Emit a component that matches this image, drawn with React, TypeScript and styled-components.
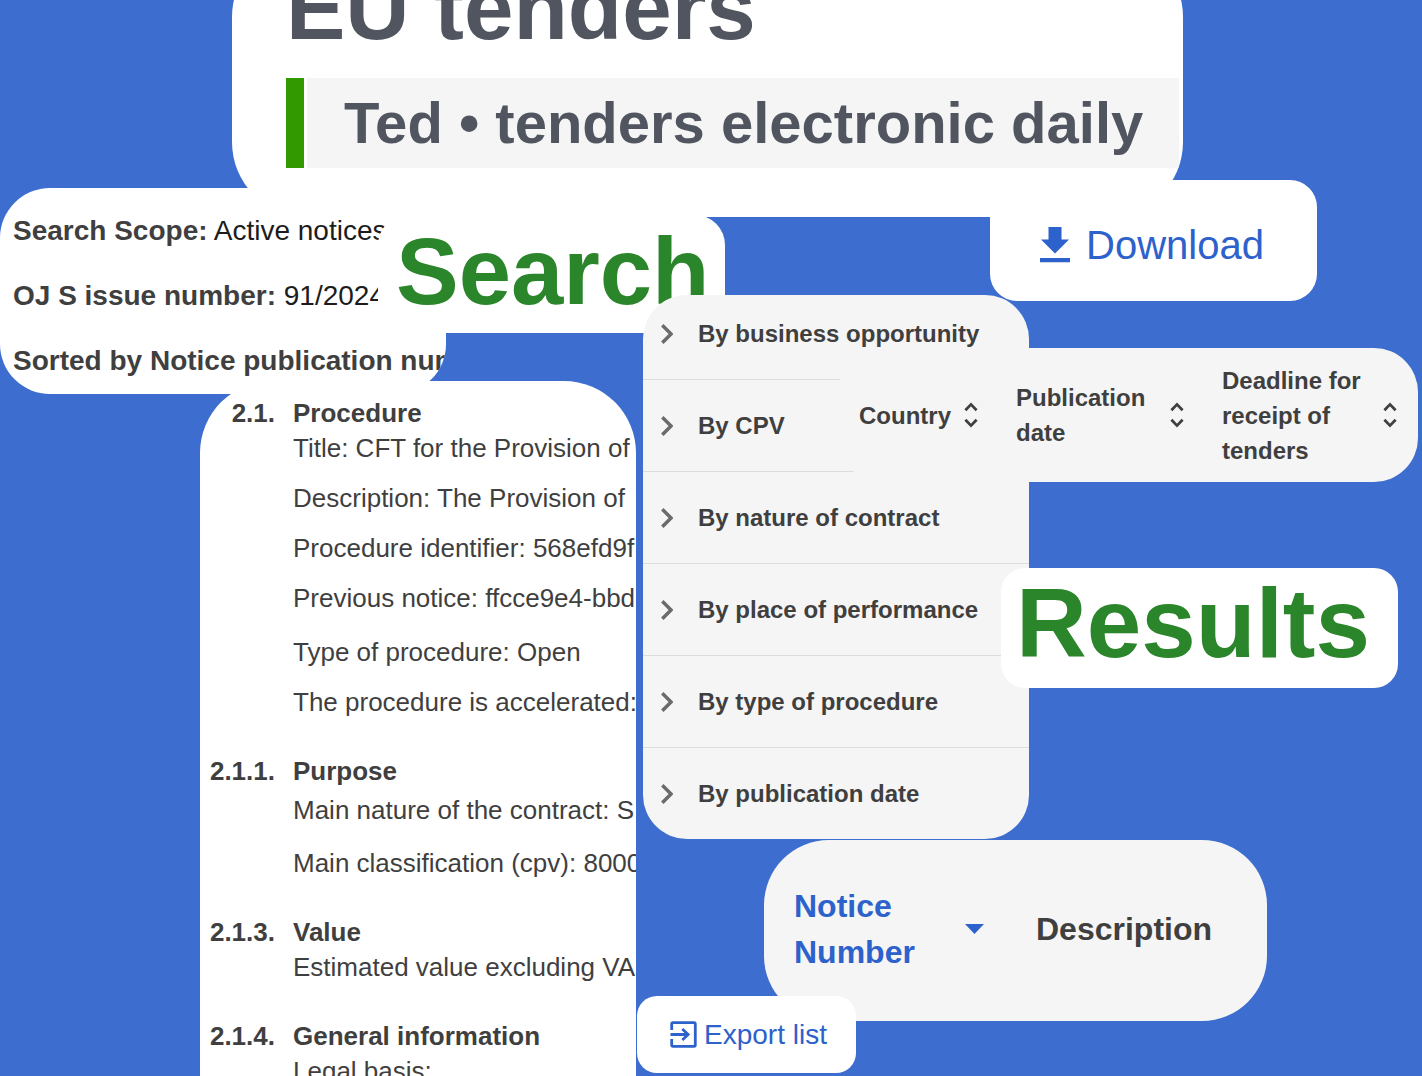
import React from "react";
import styled, { createGlobalStyle } from "styled-components";

const color = {
  backdrop: "#3d6dcf",
  paper: "#ffffff",
  panel: "#f5f5f5",
  ink: "#3f3f3f",
  heading: "#515560",
  link: "#2d61cb",
  green: "#2b852b",
  accent: "#339900",
  line: "#dcdcdc",
  chevron: "#6b6b6b",
};

const GlobalStyle = createGlobalStyle`
  * { box-sizing: border-box; }
  body {
    margin: 0;
    background: ${color.backdrop};
    color: ${color.ink};
    font-family: "Liberation Sans", Arial, sans-serif;
  }
  h1, h2, h3, p, ul { margin: 0; padding: 0; }
  button { font: inherit; color: inherit; border: 0; background: none; padding: 0; cursor: pointer; }
`;

const Board = styled.main`
  position: relative;
  height: 100vh;
  overflow: hidden;
`;

/* A snippet pinned on the free canvas. */
const Card = styled.section<{ $x: number; $y: number; $w: number; $r: number; $panel?: boolean }>`
  position: absolute;
  left: ${(p) => p.$x}px;
  top: ${(p) => p.$y}px;
  width: ${(p) => p.$w}px;
  border-radius: ${(p) => p.$r}px;
  background: ${(p) => (p.$panel ? color.panel : color.paper)};
  overflow: hidden;
  white-space: nowrap;
`;

const TitleCard = styled(Card)`
  padding: 14px 4px 49px 54px;
  color: ${color.heading};
`;

const PageTitle = styled.h1`
  font-size: 89px;
  line-height: 104px;
  margin-bottom: 18px;
`;

const Banner = styled.div`
  display: flex;
  gap: 3px;
`;

const BannerBar = styled.span`
  width: 18px;
  background: ${color.accent};
`;

const BannerText = styled.h2`
  flex: 1;
  padding-left: 37px;
  background: ${color.panel};
  font-size: 58px;
  line-height: 90px;
`;

const ScopeCard = styled(Card)`
  padding: 10px 0 1px 13px;
`;

const ScopeLine = styled.p`
  font-size: 28px;
  line-height: 65px;
  color: #1c1c1c;

  strong { color: ${color.ink}; }
`;

const WordCard = styled(Card)<{ $size: number }>`
  color: ${color.green};

  h2 {
    font-size: ${(p) => p.$size}px;
    line-height: 110px;
  }
`;

const SearchCard = styled(WordCard)`
  padding: 2px 0 6px 18px;
`;

const ResultsCard = styled(WordCard)`
  padding: 0 0 10px 15px;
`;

const ActionButton = styled.button<{ $size: number; $gap: number; $pad: string }>`
  display: flex;
  align-items: center;
  width: 100%;
  gap: ${(p) => p.$gap}px;
  padding: ${(p) => p.$pad};
  font-size: ${(p) => p.$size}px;
  line-height: 45px;
  color: ${color.link};
`;

/* The notice runs on past the foot of the window. */
const DocCard = styled(Card)`
  padding: 14px 0 72px;
`;

const DocSection = styled.section`
  display: grid;
  grid-template-columns: 75px 1fr;
  column-gap: 18px;
  margin-bottom: 34px;
  font-size: 26px;
  line-height: 34px;
`;

const DocNumber = styled.span`
  font-weight: bold;
  line-height: 36px;
  text-align: right;
`;

const DocHeading = styled.h3`
  font-size: 26px;
  line-height: 36px;
`;

const DocGroups = styled.div<{ $loose?: boolean }>`
  grid-column: 2;
  display: flex;
  flex-direction: column;
  gap: 20px;
  padding-top: ${(p) => (p.$loose ? 4 : 0)}px;
`;

const DocGroup = styled.div<{ $loose?: boolean }>`
  display: flex;
  flex-direction: column;
  gap: ${(p) => (p.$loose ? 19 : 16)}px;
`;

const FilterList = styled.ul`
  list-style: none;
  margin-top: -7px;
`;

const FilterItem = styled.li`
  & + & { border-top: 1px solid ${color.line}; }
`;

const FilterButton = styled.button`
  display: flex;
  align-items: center;
  gap: 25px;
  width: 100%;
  padding: 31px 0 30px 18px;
  font-size: 24px;
  font-weight: bold;
  line-height: 30px;
  text-align: left;
`;

const HeadTable = styled.table`
  width: 100%;
  table-layout: fixed;
  border-collapse: collapse;
  white-space: normal;
`;

const HeadCell = styled.th<{ $w?: number; $h: number; $pad: string }>`
  width: ${(p) => (p.$w ? `${p.$w}px` : "auto")};
  height: ${(p) => p.$h}px;
  padding: ${(p) => p.$pad};
  text-align: left;
  vertical-align: middle;
`;

const SortButton = styled.button`
  display: flex;
  align-items: center;
  justify-content: space-between;
  width: 100%;
  font-weight: bold;
  text-align: left;

  svg { flex: none; }
`;

const ColumnsCard = styled(Card)`
  padding: 0 3px 0 1px;
  font-size: 24px;
  line-height: 35px;
`;

const NoticeCard = styled(Card)`
  font-size: 32px;
  line-height: 46px;

  button { color: ${color.link}; }
`;

const Chevron = () => (
  <svg width="12" height="20" viewBox="0 0 12 20" fill="none" stroke={color.chevron} strokeWidth="3.4" aria-hidden="true">
    <path d="M1.3 1.3 10 10 1.3 18.7" />
  </svg>
);

const SortIcon = () => (
  <svg width="14" height="26" viewBox="0 0 14 26" fill="none" stroke={color.ink} strokeWidth="2.8" aria-hidden="true">
    <path d="M1.4 8.2 7 2.4l5.6 5.8M1.4 17.8 7 23.6l5.6-5.8" />
  </svg>
);

const CaretIcon = () => (
  <svg width="19" height="10" viewBox="0 0 19 10" fill={color.link} aria-hidden="true">
    <path d="M0 0h19L9.500 10z" />
  </svg>
);

const DownloadIcon = () => (
  <svg width="30" height="37" viewBox="0 0 30 37" fill={color.link} aria-hidden="true">
    <path d="M8.500 0h13v12.500H29L15 26.500 1 12.500h7.500zM0 31h30v4.200H0z" />
  </svg>
);

const ExportIcon = () => (
  <svg width="27" height="27" viewBox="0 0 27 27" fill="none" stroke={color.link} strokeWidth="2.800" aria-hidden="true">
    <path d="M1.700 9V3q0-1.300 1.300-1.300h21q1.300 0 1.300 1.300v21q0 1.300-1.300 1.300H3q-1.300 0-1.300-1.300v-6" />
    <path d="M.500 13.500h18M12.300 8l5.800 5.500-5.800 5.500" />
  </svg>
);

const scope = [
  { label: "Search Scope:", value: "Active notices" },
  { label: "OJ S issue number:", value: "91/2024" },
  { label: "Sorted by Notice publication number", value: "" },
];

const notice = [
  {
    number: "2.1.",
    title: "Procedure",
    groups: [
      [
        "Title: CFT for the Provision of",
        "Description: The Provision of",
        "Procedure identifier: 568efd9f",
        "Previous notice: ffcce9e4-bbd",
      ],
      ["Type of procedure: Open", "The procedure is accelerated:"],
    ],
  },
  {
    number: "2.1.1.",
    title: "Purpose",
    loose: true,
    groups: [["Main nature of the contract: S", "Main classification (cpv): 8000"]],
  },
  { number: "2.1.3.", title: "Value", groups: [["Estimated value excluding VA"]] },
  { number: "2.1.4.", title: "General information", groups: [["Legal basis:"]] },
];

const filters = [
  "By business opportunity",
  "By CPV",
  "By nature of contract",
  "By place of performance",
  "By type of procedure",
  "By publication date",
];

const columns = [
  { label: "Country", width: 157 },
  { label: "Publication date", width: 206 },
  { label: "Deadline for receipt of tenders", width: 213 },
];

export default function App() {
  return (
    <>
      <GlobalStyle />
      <Board>
        <TitleCard as="header" $x={232} $y={-58} $w={951} $r={75}>
          <PageTitle>EU tenders</PageTitle>
          <Banner>
            <BannerBar />
            <BannerText>Ted • tenders electronic daily</BannerText>
          </Banner>
        </TitleCard>

        <ScopeCard $x={0} $y={188} $w={446} $r={50}>
          {scope.map((s) => (
            <ScopeLine key={s.label}>
              <strong>{s.label}</strong> {s.value}
            </ScopeLine>
          ))}
        </ScopeCard>

        <SearchCard $x={378} $y={215} $w={347} $r={30} $size={94}>
          <h2>Search</h2>
        </SearchCard>

        <Card $x={990} $y={180} $w={327} $r={27}>
          <ActionButton type="button" $size={40} $gap={16} $pad="43px 0 33px 50px">
            <DownloadIcon />
            Download
          </ActionButton>
        </Card>

        <DocCard as="article" $x={200} $y={381} $w={436} $r={72}>
          {notice.map((n) => (
            <DocSection key={n.number}>
              <DocNumber>{n.number}</DocNumber>
              <DocHeading>{n.title}</DocHeading>
              <DocGroups $loose={n.loose}>
                {n.groups.map((lines) => (
                  <DocGroup key={lines[0]} $loose={n.loose}>
                    {lines.map((line) => (
                      <p key={line}>{line}</p>
                    ))}
                  </DocGroup>
                ))}
              </DocGroups>
            </DocSection>
          ))}
        </DocCard>

        <Card as="nav" $x={643} $y={295} $w={386} $r={44} $panel>
          <FilterList>
            {filters.map((f) => (
              <FilterItem key={f}>
                <FilterButton type="button">
                  <Chevron />
                  {f}
                </FilterButton>
              </FilterItem>
            ))}
          </FilterList>
        </Card>

        <ColumnsCard $x={838} $y={348} $w={580} $r={44} $panel>
          <HeadTable>
            <thead>
              <tr>
                {columns.map((c) => (
                  <HeadCell key={c.label} scope="col" $w={c.width} $h={134} $pad="0 18px 0 20px">
                    <SortButton type="button">
                      {c.label}
                      <SortIcon />
                    </SortButton>
                  </HeadCell>
                ))}
              </tr>
            </thead>
          </HeadTable>
        </ColumnsCard>

        <ResultsCard $x={1001} $y={568} $w={397} $r={24} $size={98}>
          <h2>Results</h2>
        </ResultsCard>

        <NoticeCard $x={764} $y={840} $w={503} $r={65} $panel>
          <HeadTable>
            <thead>
              <tr>
                <HeadCell scope="col" $w={238} $h={181} $pad="0 18px 4px 30px">
                  <SortButton type="button">
                    Notice Number
                    <CaretIcon />
                  </SortButton>
                </HeadCell>
                <HeadCell scope="col" $h={181} $pad="0 0 4px 34px">
                  Description
                </HeadCell>
              </tr>
            </thead>
          </HeadTable>
        </NoticeCard>

        <Card $x={637} $y={996} $w={219} $r={20}>
          <ActionButton type="button" $size={28} $gap={7} $pad="16px 0 16px 33px">
            <ExportIcon />
            Export list
          </ActionButton>
        </Card>
      </Board>
    </>
  );
}
